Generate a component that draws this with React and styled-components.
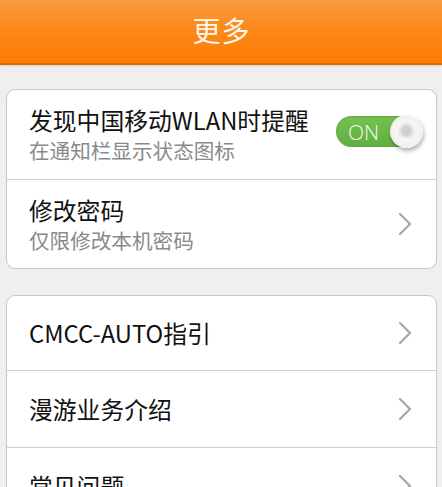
import React from "react";
import styled, { createGlobalStyle } from "styled-components";

const Global = createGlobalStyle`
  html, body { margin: 0; padding: 0; background: #efefef; }
  body { font-family: "Noto Sans CJK SC", "Noto Sans", sans-serif; overflow: hidden; }
`;

const Page = styled.div`
  width: 442px;
  height: 487px;
  background: #efefef;
  overflow: hidden;
`;

const Header = styled.header`
  height: 63px;
  background: linear-gradient(#f99b3e 0%, #fb8a1c 45%, #fe7b02 100%);
  border-bottom: 2px solid #d96a06;
  box-shadow: 0 1px 2px rgba(0,0,0,0.12);
  display: flex;
  align-items: center;
  justify-content: center;
`;

const Title = styled.h1`
  margin: 0 0 4px 1px;
  font-size: 28px;
  font-weight: 400;
  color: #fff8ea;
  letter-spacing: 1px;
`;

const Content = styled.main`
  padding: 24px 5px 0 6px;
  display: flex;
  flex-direction: column;
  gap: 26px;
`;

const Card = styled.section`
  background: #fff;
  border: 1.5px solid #c6c6c6;
  border-radius: 9px;
  display: flex;
  flex-direction: column;
`;

const Row = styled.div`
  height: ${(p) => p.$h}px;
  display: flex;
  align-items: center;
  padding: 0 22px 0 22px;
  border-top: ${(p) => (p.$first ? "none" : "1.5px solid #cfcfcf")};
`;

const Texts = styled.div`
  flex: 1;
  display: flex;
  flex-direction: column;
`;

const Main = styled.div`
  font-size: 23.8px;
  color: #111;
  line-height: 30px;
`;

const Sub = styled.div`
  font-size: 20.6px;
  color: #8a8a8a;
  line-height: 28px;
  margin-top: 1px;
`;

const Toggle = styled.div`
  width: 84px;
  height: 31px;
  border-radius: 16px;
  background: linear-gradient(#74c251, #5fae40);
  position: relative;
  margin-right: -6px;
  margin-top: -6px;
  display: flex;
  align-items: center;
  box-shadow: inset 0 1px 2px rgba(0,0,0,0.15);
`;

const ToggleLabel = styled.span`
  font-family: "Open Sans", "Liberation Sans", sans-serif;
  font-weight: 300;
  font-size: 21px;
  color: #f2fbea;
  margin-left: 12px;
`;

const Knob = styled.div`
  position: absolute;
  right: -3px;
  top: -1px;
  width: 33px;
  height: 33px;
  border-radius: 50%;
  background: radial-gradient(circle at 50% 48%, #cfcfcf 0 4px, #e2e2e2 6px, #f6f6f6 9px, #eaeaea 100%);
  box-shadow: 1px 3px 4px rgba(0,0,0,0.3);
`;

const Chevron = () => (
  <svg width="14" height="24" viewBox="0 0 14 24" style={{ marginRight: 2 }}>
    <path d="M2 2 L12 12 L2 22" fill="none" stroke="#a9a9a9" strokeWidth="2.4" strokeLinecap="round" strokeLinejoin="round" />
  </svg>
);

export default function App() {
  return (
    <Page>
      <Global />
      <Header>
        <Title>更多</Title>
      </Header>
      <Content>
        <Card>
          <Row $first $h={89}>
            <Texts>
              <Main>发现中国移动WLAN时提醒</Main>
              <Sub>在通知栏显示状态图标</Sub>
            </Texts>
            <Toggle>
              <ToggleLabel>ON</ToggleLabel>
              <Knob />
            </Toggle>
          </Row>
          <Row $h={88}>
            <Texts>
              <Main>修改密码</Main>
              <Sub>仅限修改本机密码</Sub>
            </Texts>
            <Chevron />
          </Row>
        </Card>
        <Card>
          <Row $first $h={74}>
            <Texts>
              <Main>CMCC-AUTO指引</Main>
            </Texts>
            <Chevron />
          </Row>
          <Row $h={76}>
            <Texts>
              <Main>漫游业务介绍</Main>
            </Texts>
            <Chevron />
          </Row>
          <Row $h={76}>
            <Texts>
              <Main>常见问题</Main>
            </Texts>
            <Chevron />
          </Row>
        </Card>
      </Content>
    </Page>
  );
}
